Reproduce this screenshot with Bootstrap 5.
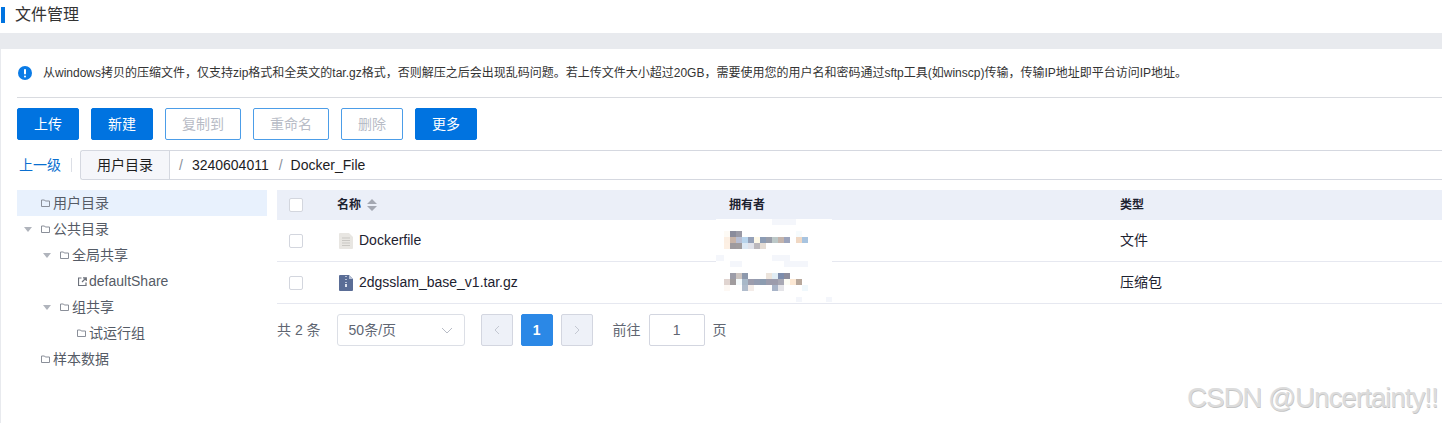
<!DOCTYPE html>
<html lang="zh">
<head>
<meta charset="utf-8">
<title>文件管理</title>
<link href="https://cdn.jsdelivr.net/npm/bootstrap@5.3.0/dist/css/bootstrap.min.css" rel="stylesheet">
<style>
html,body{height:423px;overflow:hidden}
body{background:#fff;font-family:"Liberation Sans","Noto Sans CJK SC",sans-serif;font-size:14px;color:#1d2230;position:relative}
.titlebar{height:33px;padding-left:1px;padding-bottom:3px;gap:10px}
.titlemark{width:4px;height:16px;background:#0073e0}
.titletext{font-size:16px;color:#333;margin-bottom:1px}
.graybar{height:16px;background:#e8eaee}
.mainpane{border-left:1px solid #e8eaee;padding-left:16px;height:374px}
.noticerow{height:49px;gap:11px;padding-left:1px;font-size:12px;color:#333;border-bottom:1px solid #d9dbe0}
.toolrow{gap:12px;margin-top:10px}
.tbtn{height:32px;font-size:14px;border-radius:2px;padding:0;border:1px solid #0073e0}
.tbtn-on{width:62px;background:#0073e0;color:#fff}
.tbtn-on:hover{background:#0073e0;color:#fff}
.tbtn-off{background:#fff;color:#b8bcc6;border-color:#4c9de8}
.w76{width:76px}
.w62{width:62px}
.crumbrow{margin-top:10px;height:30px}
.uplink{color:#0a6fd0;text-decoration:none;padding-left:2px;width:54px}
.crumbsep{width:1px;height:14px;background:#dcdfe6;margin-right:8px}
.crumbbox{border:1px solid #d5d8e0;border-right:0;border-radius:3px 0 0 3px;height:30px;color:#1d1d1f}
.crumbhead{width:89px;background:#f5f6fa;border-right:1px solid #d5d8e0;border-radius:3px 0 0 3px;height:100%}
.crumbslash{color:#8a8f99;margin:0 8px 0 10px}
.crumbslash-first{margin-left:9px;margin-right:9px}
.contentrow{margin-top:10px;gap:10px}
.treepane{width:250px;flex:none;color:#555b66}
.treeitem{height:26px;gap:3px}
.treeitem.on{background:#e8f1fd}
.lv0{padding-left:24px}
.lv1{padding-left:43px}
.lv2{padding-left:60px}
.treeitem.linkitem{padding-left:61px;gap:1px}
.caretdown{width:0;height:0;border-left:4px solid transparent;border-right:4px solid transparent;border-top:5px solid #b0b4bc;margin-left:-17px;margin-right:6px}
.tablepane{flex:1;min-width:0;position:relative}
.filetable{table-layout:fixed;width:100%;margin:0;font-size:14px;--bs-table-bg:transparent;border-collapse:separate;border-spacing:0}
.filetable th{background:#ebeff8;height:30px;padding:0 12px;font-size:12px;font-weight:700;color:#1d2230;border:0;vertical-align:middle}
.filetable td{height:42px;padding:0 12px;border-bottom:1px solid #e6e8f0;vertical-align:middle;color:#1d2230}
.col-a{width:48px}
.col-b{width:392px}
.col-c{width:391px}
.fakecheck{display:block;width:14px;height:14px;border:1px solid #d3d6de;border-radius:2px;background:#fff}
.namecell{gap:6px;padding-left:2px}
.sortarrows{margin-left:6px;vertical-align:-2px}
.mosaic{position:absolute;left:439px;top:29px}
.pagerrow{margin-top:10px;height:32px;color:#606672}
.sizesel{width:128px;height:32px;border:1px solid #dcdfe6;border-radius:3px;margin-left:16px;padding:0 11px;color:#606672}
.pgbtn{width:32px;height:32px;border:1px solid #d3d6e0;border-radius:2px;background:#eef1f8}
.pgbtn.act{background:#2b88e6;border-color:#2b88e6;color:#fff;font-weight:700}
.pagergroup{gap:8px;margin-left:16px}
.gotolabel{margin-left:20px}
.gotobox{width:56px;height:32px;border:1px solid #d3d6e0;border-radius:2px;margin:0 8px 0 8px}
.wmark{position:absolute;right:4px;top:380px;font-size:27.500px;letter-spacing:-.9px;color:#dcdcdc;text-shadow:.5px .5px .5px #c4c4c4,-.5px -.5px 0 #f4f4f4;line-height:36px;white-space:nowrap}
</style>
</head>
<body>
<div class="titlebar d-flex align-items-center">
  <span class="titlemark"></span><span class="titletext">文件管理</span>
</div>
<div class="graybar"></div>
<div class="mainpane">
  <div class="noticerow d-flex align-items-center">
    <svg width="14" height="14" viewBox="0 0 14 14"><circle cx="7" cy="7" r="7" fill="#0a7be6"/><rect x="6" y="3" width="2" height="5.400" rx=".8" fill="#fff"/><rect x="6" y="9.400" width="2" height="2" rx="1" fill="#fff"/></svg>
    <span>从windows拷贝的压缩文件，仅支持zip格式和全英文的tar.gz格式，否则解压之后会出现乱码问题。若上传文件大小超过20GB，需要使用您的用户名和密码通过sftp工具(如winscp)传输，传输IP地址即平台访问IP地址。</span>
  </div>
  <div class="toolrow d-flex">
    <button type="button" class="btn tbtn tbtn-on">上传</button>
    <button type="button" class="btn tbtn tbtn-on">新建</button>
    <button type="button" class="btn tbtn tbtn-off w76">复制到</button>
    <button type="button" class="btn tbtn tbtn-off w76">重命名</button>
    <button type="button" class="btn tbtn tbtn-off w62">删除</button>
    <button type="button" class="btn tbtn tbtn-on">更多</button>
  </div>
  <div class="crumbrow d-flex align-items-center">
    <a class="uplink" href="#">上一级</a>
    <span class="crumbsep"></span>
    <div class="crumbbox flex-grow-1 d-flex align-items-center">
      <span class="crumbhead d-flex align-items-center justify-content-center">用户目录</span>
      <span class="crumbslash crumbslash-first">/</span><span>3240604011</span><span class="crumbslash">/</span><span>Docker_File</span>
    </div>
  </div>
  <div class="contentrow d-flex">
    <div class="treepane">
      <div class="treeitem on lv0 d-flex align-items-center"><svg width="9" height="8" viewBox="0 0 9 8"><path d="M.5 1h3l.8 1h4.200v5.500h-8z" fill="none" stroke="#8a8f99"/></svg><span>用户目录</span></div>
      <div class="treeitem lv0 d-flex align-items-center"><span class="caretdown"></span><svg width="9" height="8" viewBox="0 0 9 8"><path d="M.5 1h3l.8 1h4.200v5.500h-8z" fill="none" stroke="#8a8f99"/></svg><span>公共目录</span></div>
      <div class="treeitem lv1 d-flex align-items-center"><span class="caretdown"></span><svg width="9" height="8" viewBox="0 0 9 8"><path d="M.5 1h3l.8 1h4.200v5.500h-8z" fill="none" stroke="#8a8f99"/></svg><span>全局共享</span></div>
      <div class="treeitem linkitem d-flex align-items-center"><svg width="10" height="9" viewBox="0 0 10 9"><path d="M3.500 1H.5v7.500H8V5.500M5 .8h3.300v3.300M8 1 4 5" fill="none" stroke="#6c717b" stroke-width="1.200"/></svg><span>defaultShare</span></div>
      <div class="treeitem lv1 d-flex align-items-center"><span class="caretdown"></span><svg width="9" height="8" viewBox="0 0 9 8"><path d="M.5 1h3l.8 1h4.200v5.500h-8z" fill="none" stroke="#8a8f99"/></svg><span>组共享</span></div>
      <div class="treeitem lv2 d-flex align-items-center"><svg width="9" height="8" viewBox="0 0 9 8"><path d="M.5 1h3l.8 1h4.200v5.500h-8z" fill="none" stroke="#8a8f99"/></svg><span>试运行组</span></div>
      <div class="treeitem lv0 d-flex align-items-center"><svg width="9" height="8" viewBox="0 0 9 8"><path d="M.5 1h3l.8 1h4.200v5.500h-8z" fill="none" stroke="#8a8f99"/></svg><span>样本数据</span></div>
    </div>
    <div class="tablepane">
      <table class="table filetable">
        <colgroup><col class="col-a"><col class="col-b"><col class="col-c"><col></colgroup>
        <thead>
          <tr>
            <th><span class="fakecheck"></span></th>
            <th>名称<svg class="sortarrows" width="10" height="12" viewBox="0 0 10 12"><path d="M5 0l5 5H0zM0 7h10l-5 5z" fill="#a4a8b2"/></svg></th>
            <th>拥有者</th>
            <th>类型</th>
          </tr>
        </thead>
        <tbody>
          <tr>
            <td><span class="fakecheck"></span></td>
            <td><div class="namecell d-flex align-items-center">
              <svg width="14" height="16" viewBox="0 0 14 16"><path d="M0 1a1 1 0 0 1 1-1h9l4 4v11a1 1 0 0 1-1 1H1a1 1 0 0 1-1-1z" fill="#e8e6e2"/><path d="M3 5h8M3 7.500h8M3 10h8M3 12.500h8" stroke="#c9c7c3"/></svg>
              <span>Dockerfile</span></div></td>
            <td></td>
            <td>文件</td>
          </tr>
          <tr>
            <td><span class="fakecheck"></span></td>
            <td><div class="namecell d-flex align-items-center">
              <svg width="14" height="16" viewBox="0 0 14 16"><path d="M0 1a1 1 0 0 1 1-1h9l4 4v11a1 1 0 0 1-1 1H1a1 1 0 0 1-1-1z" fill="#5a6d96"/><path d="M10 0l4 4h-4z" fill="#b8c2d6"/><path d="M7 1v1M7 4v1M7 7v1" stroke="#dfe4ee" stroke-width="1.400"/><rect x="6" y="9" width="2" height="3" fill="#dfe4ee"/></svg>
              <span>2dgsslam_base_v1.tar.gz</span></div></td>
            <td></td>
            <td>压缩包</td>
          </tr>
        </tbody>
      </table>
      <svg class="mosaic" width="116" height="84" viewBox="716 219 116 84">
        <rect x="716" y="219" width="116" height="81" fill="#fff"/>
        <g fill="#f4f6fb">
          <rect x="772" y="219" width="24" height="6"/><rect x="716" y="255" width="8" height="6"/><rect x="772" y="255" width="18" height="6"/><rect x="730" y="261" width="12" height="6"/><rect x="784" y="261" width="24" height="6"/><rect x="796" y="297" width="6" height="5"/><rect x="826" y="297" width="6" height="5"/>
        </g>
        <g>
          <rect x="724" y="231" width="6" height="6" fill="#fdfaf5"/><rect x="730" y="231" width="6" height="6" fill="#8a8c9c"/><rect x="736" y="231" width="6" height="6" fill="#9a9aa6"/><rect x="796" y="231" width="6" height="6" fill="#f6fbfd"/>
          <rect x="724" y="237" width="6" height="6" fill="#fcefe3"/><rect x="730" y="237" width="6" height="6" fill="#c8b4a8"/><rect x="736" y="237" width="6" height="6" fill="#b8bfd4"/><rect x="742" y="237" width="6" height="6" fill="#b8d4ec"/><rect x="748" y="237" width="6" height="6" fill="#94a0b8"/><rect x="754" y="237" width="6" height="6" fill="#fdf8e8"/><rect x="760" y="237" width="6" height="6" fill="#8c9cb4"/><rect x="766" y="237" width="6" height="6" fill="#9a9eaa"/><rect x="772" y="237" width="6" height="6" fill="#bcc8c8"/><rect x="778" y="237" width="6" height="6" fill="#c4b4ac"/><rect x="784" y="237" width="6" height="6" fill="#9ca4bc"/><rect x="796" y="237" width="6" height="6" fill="#f0d8c4"/><rect x="802" y="237" width="6" height="6" fill="#a8c4e0"/>
          <rect x="724" y="243" width="6" height="6" fill="#fdf0e4"/><rect x="730" y="243" width="6" height="6" fill="#9e9a9e"/><rect x="736" y="243" width="6" height="6" fill="#a09c9e"/><rect x="742" y="243" width="6" height="6" fill="#dce8f4"/><rect x="748" y="243" width="6" height="6" fill="#e0e2ea"/><rect x="754" y="243" width="6" height="6" fill="#bcb8bc"/><rect x="760" y="243" width="6" height="6" fill="#e4dcd4"/>
          <rect x="730" y="273" width="6" height="6" fill="#9c9ca8"/><rect x="736" y="273" width="6" height="6" fill="#ccc4c0"/><rect x="742" y="273" width="6" height="6" fill="#8c98ac"/><rect x="766" y="273" width="6" height="6" fill="#ece4dc"/><rect x="772" y="273" width="6" height="6" fill="#e0ecf4"/><rect x="778" y="273" width="6" height="6" fill="#7c8cac"/><rect x="784" y="273" width="6" height="6" fill="#8c8c9c"/>
          <rect x="724" y="279" width="6" height="6" fill="#e0d4d0"/><rect x="730" y="279" width="6" height="6" fill="#a09c9e"/><rect x="736" y="279" width="6" height="6" fill="#f4fafc"/><rect x="742" y="279" width="6" height="6" fill="#a8b8c8"/><rect x="748" y="279" width="6" height="6" fill="#9c9cac"/><rect x="754" y="279" width="6" height="6" fill="#949cb0"/><rect x="760" y="279" width="6" height="6" fill="#8c9cb0"/><rect x="766" y="279" width="6" height="6" fill="#9c9cac"/><rect x="772" y="279" width="6" height="6" fill="#9c9cac"/><rect x="778" y="279" width="6" height="6" fill="#a8a8b4"/><rect x="784" y="279" width="6" height="6" fill="#fcfcf4"/><rect x="790" y="279" width="6" height="6" fill="#fce8d4"/><rect x="796" y="279" width="6" height="6" fill="#b8a89c"/>
          <rect x="724" y="285" width="6" height="6" fill="#fdf8f4"/><rect x="742" y="285" width="6" height="6" fill="#b0bccc"/><rect x="748" y="285" width="6" height="6" fill="#f4ece8"/><rect x="772" y="285" width="6" height="6" fill="#a8b4c8"/><rect x="778" y="285" width="6" height="6" fill="#e4e4e8"/><rect x="802" y="285" width="6" height="6" fill="#f0f8fc"/>
        </g>
      </svg>
      <div class="pagerrow d-flex align-items-center">
        <span>共 2 条</span>
        <div class="sizesel d-flex align-items-center justify-content-between">
          <span>50条/页</span>
          <svg width="12" height="7" viewBox="0 0 12 7"><path d="M1 1l5 5 5-5" fill="none" stroke="#b8bcc6"/></svg>
        </div>
        <div class="pagergroup d-flex">
          <span class="pgbtn d-flex align-items-center justify-content-center"><svg width="6" height="10" viewBox="0 0 6 10"><path d="M5 1L1 5l4 4" fill="none" stroke="#c4c8d2"/></svg></span>
          <span class="pgbtn act d-flex align-items-center justify-content-center">1</span>
          <span class="pgbtn d-flex align-items-center justify-content-center"><svg width="6" height="10" viewBox="0 0 6 10"><path d="M1 1l4 4-4 4" fill="none" stroke="#c4c8d2"/></svg></span>
        </div>
        <span class="gotolabel">前往</span>
        <span class="gotobox d-flex align-items-center justify-content-center">1</span>
        <span>页</span>
      </div>
    </div>
  </div>
</div>
<div class="wmark">CSDN @Uncertainty!!</div>
<script src="https://cdn.jsdelivr.net/npm/bootstrap@5.3.0/dist/js/bootstrap.bundle.min.js"></script>
</body>
</html>
